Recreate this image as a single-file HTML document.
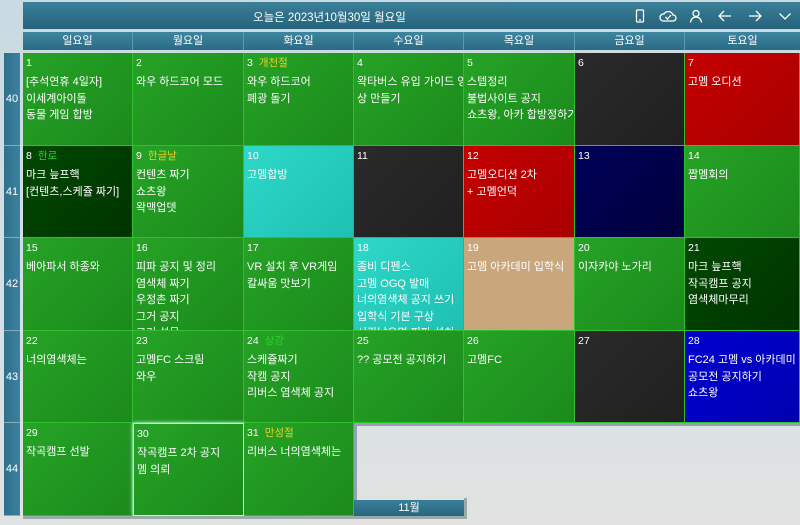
<!DOCTYPE html>
<html><head><meta charset="utf-8"><style>
*{margin:0;padding:0;box-sizing:border-box}
body{width:800px;height:525px;overflow:hidden;position:relative;font-family:"Liberation Sans","Noto Sans CJK KR",sans-serif;font-size:11px;color:#fff;background:linear-gradient(180deg,#c9dae2 0%,#d4e0e4 60%,#e2e2e2 100%)}
.hdr{position:absolute;left:23px;top:2px;width:777px;height:27px;background:linear-gradient(180deg,#3a7f98,#26647c);}
.hdr .t{position:absolute;left:230px;top:7px;font-size:11.5px}
.ic{position:absolute;top:7px}
.dh{position:absolute;top:32px;height:18px;background:linear-gradient(180deg,#3e86a0,#2a6a84);text-align:center;line-height:18px;font-size:11px;border-right:1px solid #5b9ab2}
.wk{position:absolute;left:4px;width:16px;background:linear-gradient(90deg,#2f6f8a,#3b82a0);font-size:11px;text-align:center;border-bottom:1px solid #8ab}
.c{position:absolute;overflow:hidden;padding:3px 0 0 3px;line-height:16.5px;border:1px solid #2fbf2f;border-width:0 1px 1px 0}
.c .n{font-size:10.5px;height:18px;line-height:15px;padding-left:0}
.c .n span{margin-left:6px}
.g{background:linear-gradient(135deg,#26a326,#1b8a1b)}
.dg{background:linear-gradient(135deg,#004800,#003300)}
.cy{background:linear-gradient(135deg,#2ed8c8,#1ec0b2)}
.bk{background:linear-gradient(135deg,#2a2a2a,#202020);border-color:#2fbf2f}
.rd{background:linear-gradient(135deg,#c40000,#a80000)}
.nv{background:linear-gradient(135deg,#000058,#00003c)}
.bl{background:linear-gradient(135deg,#0000d0,#0000b0)}
.tn{background:#c9a67c}
.y{color:#f0d020}.gr{color:#30d030}
</style></head><body>
<div class="hdr"><div class="t">오늘은 2023년10월30일 월요일</div>
<svg class="ic" style="left:610px" width="14" height="14" viewBox="0 0 14 14" fill="none" stroke="#fff" stroke-width="1.3"><rect x="3.5" y="1" width="7" height="12" rx="1"/><line x1="6" y1="11" x2="8" y2="11"/></svg>
<svg class="ic" style="left:636px" width="18" height="14" viewBox="0 0 18 14" fill="none" stroke="#fff" stroke-width="1.3"><path d="M4 12h10a3 3 0 0 0 0-6 5 5 0 0 0-9-1A3.5 3.5 0 0 0 4 12z"/><path d="M6.5 8l2 2 3.5-4"/></svg>
<svg class="ic" style="left:666px" width="14" height="14" viewBox="0 0 14 14" fill="none" stroke="#fff" stroke-width="1.3"><circle cx="7" cy="4.5" r="3"/><path d="M1.5 13.5a5.5 5.5 0 0 1 11 0"/></svg>
<svg class="ic" style="left:695px" width="14" height="14" viewBox="0 0 14 14" fill="none" stroke="#fff" stroke-width="1.3"><path d="M13 7H1M6 2L1 7l5 5"/></svg>
<svg class="ic" style="left:725px" width="14" height="14" viewBox="0 0 14 14" fill="none" stroke="#fff" stroke-width="1.3"><path d="M1 7h12M8 2l5 5-5 5"/></svg>
<svg class="ic" style="left:755px" width="14" height="14" viewBox="0 0 14 14" fill="none" stroke="#fff" stroke-width="1.3"><path d="M1.5 4.5L7 10l5.5-5.5"/></svg>
</div>
<div class="dh" style="left:23px;width:110px">일요일</div>
<div class="dh" style="left:133px;width:111px">월요일</div>
<div class="dh" style="left:244px;width:110px">화요일</div>
<div class="dh" style="left:354px;width:110px">수요일</div>
<div class="dh" style="left:464px;width:111px">목요일</div>
<div class="dh" style="left:575px;width:110px">금요일</div>
<div class="dh" style="left:685px;width:115px;border:0">토요일</div>

<div class="wk" style="top:53px;height:93px;line-height:93px">40</div>
<div class="wk" style="top:146px;height:92px;line-height:92px">41</div>
<div class="wk" style="top:238px;height:93px;line-height:93px">42</div>
<div class="wk" style="top:331px;height:92px;line-height:92px">43</div>
<div class="wk" style="top:423px;height:93px;line-height:93px">44</div>

<!-- row 40 -->
<div class="c g" style="left:23px;top:53px;width:110px;height:93px"><div class="n">1</div>[추석연휴 4일자]<br>이세계아이돌<br>동물 게임 합방</div>
<div class="c g" style="left:133px;top:53px;width:111px;height:93px"><div class="n">2</div>와우 하드코어 모드</div>
<div class="c g" style="left:244px;top:53px;width:110px;height:93px"><div class="n">3<span class="y">개천절</span></div>와우 하드코어<br>폐광 돌기</div>
<div class="c g" style="left:354px;top:53px;width:110px;height:93px"><div class="n">4</div><span style="white-space:nowrap">왁타버스 유입 가이드 영</span><br>상 만들기</div>
<div class="c g" style="left:464px;top:53px;width:111px;height:93px"><div class="n">5</div><span style="white-space:nowrap">스텝정리<br>불법사이트 공지<br>쇼츠왕, 아카 합방정하기</span></div>
<div class="c bk" style="left:575px;top:53px;width:110px;height:93px"><div class="n">6</div></div>
<div class="c rd" style="left:685px;top:53px;width:115px;height:93px"><div class="n">7</div>고멤 오디션</div>
<!-- row 41 -->
<div class="c dg" style="left:23px;top:146px;width:110px;height:92px"><div class="n">8<span class="gr">한로</span></div>마크 늪프핵<br>[컨텐츠,스케쥴 짜기]</div>
<div class="c g" style="left:133px;top:146px;width:111px;height:92px"><div class="n">9<span class="y">한글날</span></div>컨텐츠 짜기<br>쇼츠왕<br>왁맥업뎃</div>
<div class="c cy" style="left:244px;top:146px;width:110px;height:92px"><div class="n">10</div>고멤합방</div>
<div class="c bk" style="left:354px;top:146px;width:110px;height:92px"><div class="n">11</div></div>
<div class="c rd" style="left:464px;top:146px;width:111px;height:92px"><div class="n">12</div>고멤오디션 2차<br>+ 고멤언덕</div>
<div class="c nv" style="left:575px;top:146px;width:110px;height:92px"><div class="n">13</div></div>
<div class="c g" style="left:685px;top:146px;width:115px;height:92px"><div class="n">14</div>짭멤회의</div>
<!-- row 42 -->
<div class="c g" style="left:23px;top:238px;width:110px;height:93px"><div class="n">15</div>베아파서 하종와</div>
<div class="c g" style="left:133px;top:238px;width:111px;height:93px"><div class="n">16</div>피파 공지 및 정리<br>염색체 짜기<br>우정촌 짜기<br>그거 공지<br>그거 설문</div>
<div class="c g" style="left:244px;top:238px;width:110px;height:93px"><div class="n">17</div>VR 설치 후 VR게임<br>칼싸움 맛보기</div>
<div class="c cy" style="left:354px;top:238px;width:110px;height:93px"><div class="n">18</div><span style="white-space:nowrap">좀비 디펜스<br>고멤 OGQ 발매<br>너의염색체 공지 쓰기<br>입학식 기본 구상<br>시간남으면 피파 설치</span></div>
<div class="c tn" style="left:464px;top:238px;width:111px;height:93px"><div class="n">19</div>고멤 아카데미 입학식</div>
<div class="c g" style="left:575px;top:238px;width:110px;height:93px"><div class="n">20</div>이자카야 노가리</div>
<div class="c dg" style="left:685px;top:238px;width:115px;height:93px"><div class="n">21</div>마크 늪프핵<br>작곡캠프 공지<br>염색체마무리</div>
<!-- row 43 -->
<div class="c g" style="left:23px;top:331px;width:110px;height:92px"><div class="n">22</div>너의염색체는</div>
<div class="c g" style="left:133px;top:331px;width:111px;height:92px"><div class="n">23</div>고멤FC 스크림<br>와우</div>
<div class="c g" style="left:244px;top:331px;width:110px;height:92px"><div class="n">24<span class="gr">상강</span></div>스케쥴짜기<br>작캠 공지<br>리버스 염색체 공지</div>
<div class="c g" style="left:354px;top:331px;width:110px;height:92px"><div class="n">25</div>?? 공모전 공지하기</div>
<div class="c g" style="left:464px;top:331px;width:111px;height:92px"><div class="n">26</div>고멤FC</div>
<div class="c bk" style="left:575px;top:331px;width:110px;height:92px"><div class="n">27</div></div>
<div class="c bl" style="left:685px;top:331px;width:115px;height:92px"><div class="n">28</div><span style="white-space:nowrap">FC24 고멤 vs 아카데미<br>공모전 공지하기<br>쇼츠왕</span></div>
<div style="position:absolute;left:354px;top:423px;width:446px;height:3px;background:#8fa4ac"></div>
<div style="position:absolute;left:354px;top:423px;width:3px;height:78px;background:#8fa4ac"></div>
<!-- row 44 -->
<div class="c g" style="left:23px;top:423px;width:110px;height:93px"><div class="n">29</div>작곡캠프 선발</div>
<div class="c g" style="left:133px;top:423px;width:111px;height:93px;border:1px solid #cfeee0;box-shadow:0 0 4px #dff"><div class="n">30</div>작곡캠프 2차 공지<br>멤 의뢰</div>
<div class="c g" style="left:244px;top:423px;width:110px;height:93px"><div class="n">31<span class="y">만성절</span></div>리버스 너의염색체는</div>
<div style="position:absolute;left:354px;top:500px;width:110px;height:17px;background:linear-gradient(180deg,#3a7f98,#26647c);text-align:center;line-height:17px;font-size:11px">11월</div>
<div style="position:absolute;left:464px;top:498px;width:3px;height:21px;background:#9aa"></div>
<div style="position:absolute;left:23px;top:516px;width:444px;height:3px;background:#9aa"></div>
</body></html>
